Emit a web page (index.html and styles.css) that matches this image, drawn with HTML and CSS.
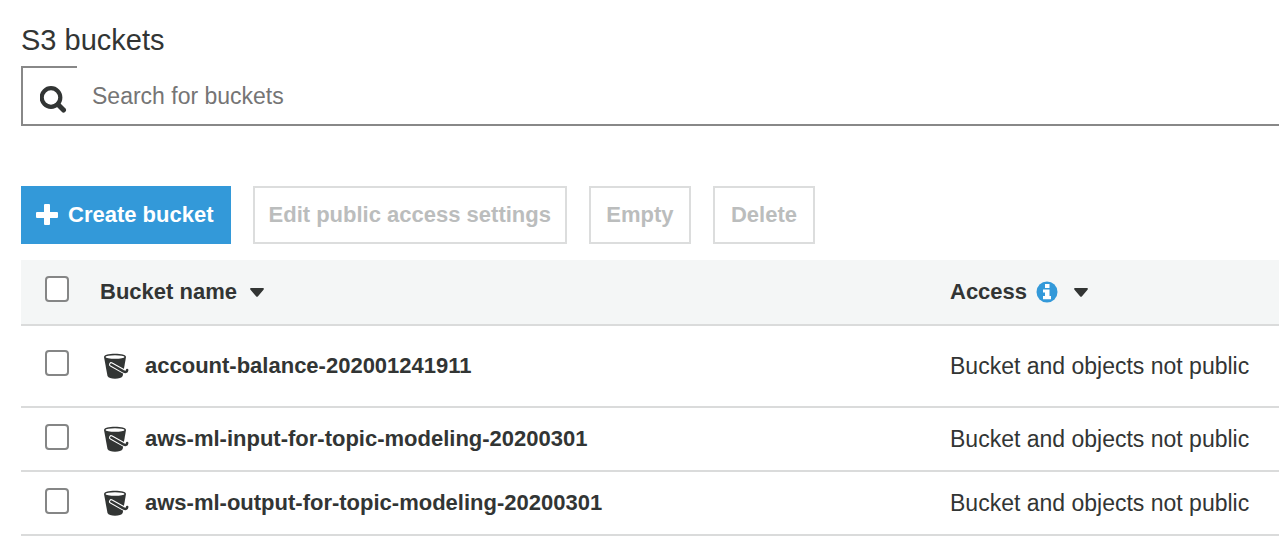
FILE: index.html
```html
<!DOCTYPE html>
<html lang="en">
<head>
<meta charset="utf-8">
<title>S3 buckets</title>
<link rel="stylesheet" href="styles.css">
</head>
<body>
<svg class="sprite" aria-hidden="true">
  <symbol id="bucket" viewBox="0 0 26 26">
    <path fill="#323534" d="M1 4C1 2 6 .8 12 .8S23 2 23 4l-3.300 19c-.8 1.900-4 2.700-7.700 2.700S5.300 24.900 4.500 23z"/>
    <ellipse cx="12" cy="4" rx="9.500" ry="1.800" fill="#fff"/>
    <path fill="none" stroke="#fff" stroke-width="4.600" stroke-linecap="round" d="M8.300 11.500 20.500 18.300"/>
    <path fill="none" stroke="#323534" stroke-width="2.500" stroke-linecap="round" stroke-linejoin="round" d="M8.300 11.500 20 18.200q3.800 2 4.200-1.200"/>
  </symbol>
  <symbol id="caret" viewBox="0 0 14 9">
    <path fill="#323534" d="M1 0h12q1.500.2.500 1.700L8 8.200Q7 9.400 6 8.200L.5 1.700Q-.5.200 1 0z"/>
  </symbol>
</svg>
<main class="page">
  <h1 class="title">S3 buckets</h1>
  <form class="search" role="search">
    <label class="search-label" for="search" aria-label="Search">
      <svg class="search-icon" viewBox="0 0 27 27" aria-hidden="true">
        <circle cx="11" cy="11.500" r="9.300" fill="none" stroke="#323534" stroke-width="4.200"/>
        <path d="m18 18.500 5.500 5.500" stroke="#323534" stroke-width="5" stroke-linecap="round"/>
      </svg>
    </label>
    <input class="search-input" id="search" type="text" placeholder="Search for buckets">
  </form>
  <div class="actions">
    <button class="button button-primary" type="button">
      <svg class="plus-icon" viewBox="0 0 22 22" aria-hidden="true"><path fill="#fff" d="M9 0h4q1 0 1 1v7h7q1 0 1 1v4q0 1-1 1h-7v6q0 1-1 1H9q-1 0-1-1v-6H1q-1 0-1-1V9q0-1 1-1h7V1q0-1 1-1z"/></svg>
      Create bucket
    </button>
    <button class="button" type="button" disabled>Edit public access settings</button>
    <button class="button" type="button" disabled>Empty</button>
    <button class="button" type="button" disabled>Delete</button>
  </div>
  <table class="buckets">
    <thead>
      <tr>
        <th class="col-check"><input class="check" type="checkbox" aria-label="Select all buckets"></th>
        <th class="col-name"><div class="heading">Bucket name <svg class="caret" aria-hidden="true"><use href="#caret"/></svg></div></th>
        <th class="col-access"><div class="heading heading-info">Access
          <svg class="info-icon" viewBox="0 0 22 22" aria-hidden="true"><circle cx="11" cy="11" r="10.500" fill="#3399d9"/><path fill="#fff" d="M9 3h4.500v4H9zM7 8.500h6.500V15H15v3.300H7V15h2v-3.500H7z"/></svg>
          <svg class="caret" aria-hidden="true"><use href="#caret"/></svg></div></th>
      </tr>
    </thead>
    <tbody>
      <tr class="row-tall">
        <td class="col-check"><input class="check" id="b1" type="checkbox"></td>
        <td><label class="bucket" for="b1"><svg class="bucket-icon" aria-hidden="true"><use href="#bucket"/></svg>account-balance-202001241911</label></td>
        <td>Bucket and objects not public</td>
      </tr>
      <tr>
        <td class="col-check"><input class="check" id="b2" type="checkbox"></td>
        <td><label class="bucket" for="b2"><svg class="bucket-icon" aria-hidden="true"><use href="#bucket"/></svg>aws-ml-input-for-topic-modeling-20200301</label></td>
        <td>Bucket and objects not public</td>
      </tr>
      <tr>
        <td class="col-check"><input class="check" id="b3" type="checkbox"></td>
        <td><label class="bucket" for="b3"><svg class="bucket-icon" aria-hidden="true"><use href="#bucket"/></svg>aws-ml-output-for-topic-modeling-20200301</label></td>
        <td>Bucket and objects not public</td>
      </tr>
    </tbody>
  </table>
</main>
</body>
</html>
```

FILE: styles.css
```css
* {
  box-sizing: border-box;
}

body {
  margin: 0;
  background: #fff;
  color: #323534;
  font-family: "Liberation Sans", Arial, sans-serif;
  font-size: 23px;
  line-height: 28px;
}

.sprite {
  display: none;
}

.page {
  padding: 24px 0 0 21px;
}

.title {
  margin: 0 0 10px;
  font-size: 29px;
  line-height: 32px;
  font-weight: 400;
}

.search {
  display: flex;
  height: 60px;
  border-left: 2px solid #888;
  border-bottom: 2px solid #888;
}

.search-label {
  display: flex;
  width: 54px;
  padding: 18px 0 0 17px;
  border-top: 2px solid #888;
}

.search-icon {
  width: 27px;
  height: 27px;
}

.search-input {
  flex: 1;
  min-width: 0;
  border: 0;
  padding: 2px 15px 0;
  background: transparent;
  color: #323534;
  font: inherit;
  outline: none;
}

.search-input::placeholder {
  color: #757575;
  opacity: 1;
}

.actions {
  display: flex;
  gap: 22px;
  padding: 60px 0 16px;
}

.button {
  display: flex;
  align-items: center;
  justify-content: center;
  gap: 10px;
  min-width: 102px;
  height: 58px;
  padding: 0 14px;
  border: 2px solid #dcdddd;
  background: #fff;
  color: #bbbdbd;
  font: bold 22px/28px "Liberation Sans", Arial, sans-serif;
  white-space: nowrap;
}

.button-primary {
  padding: 0 15px 0 13px;
  border-color: #3399d9;
  background: #3399d9;
  color: #fff;
}

.plus-icon {
  width: 22px;
  height: 22px;
}

.buckets {
  width: 100%;
  table-layout: fixed;
  border-collapse: separate;
  border-spacing: 0;
}

.buckets th,
.buckets td {
  height: 64px;
  padding: 0;
  border-bottom: 2px solid #dadbdb;
  text-align: left;
  vertical-align: middle;
  white-space: nowrap;
}

.buckets th {
  height: 66px;
  background: #f4f6f6;
  font-size: 22px;
}

.buckets .row-tall td {
  height: 82px;
}

.buckets .col-check {
  width: 79px;
  padding: 0 0 4px 24px;
}

.buckets th.col-check,
.buckets .row-tall .col-check {
  padding-bottom: 6px;
}

.col-access {
  width: 329px;
}

.check {
  display: block;
  appearance: none;
  width: 24px;
  height: 26px;
  margin: 0;
  border: 2px solid #858686;
  border-radius: 4px;
  background: #fff;
}

.check:checked {
  background: #3399d9;
}

.heading {
  display: flex;
  align-items: center;
  gap: 13px;
}

.heading-info {
  gap: 9px;
}

.heading-info .caret {
  margin-left: 7px;
}

.caret {
  width: 14px;
  height: 9px;
}

.info-icon {
  width: 22px;
  height: 22px;
}

.bucket {
  display: flex;
  align-items: center;
  gap: 16px;
  padding-left: 3px;
  font-size: 22px;
  font-weight: 700;
}

.bucket-icon {
  width: 26px;
  height: 26px;
}
```
